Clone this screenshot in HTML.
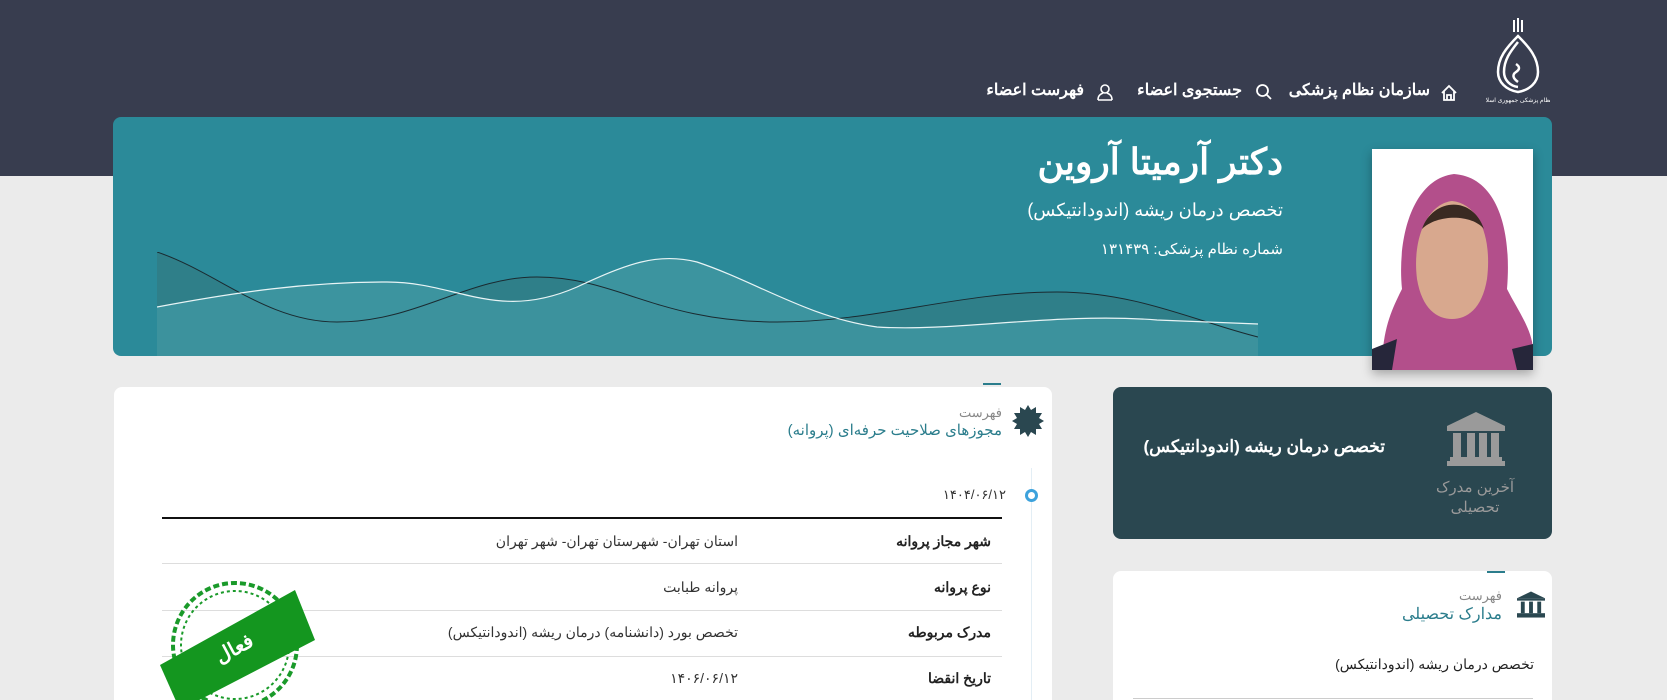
<!DOCTYPE html>
<html><head><meta charset="utf-8">
<style>
*{margin:0;padding:0;box-sizing:border-box}
html{width:1667px;height:700px;overflow:hidden}
body{width:1667px;height:700px;overflow:hidden;background:#ebebeb;font-family:"Liberation Sans","Noto Sans CJK SC",sans-serif;direction:rtl;position:relative}
.abs{position:absolute}
.hdr{left:0;top:0;width:1667px;height:176px;background:#383d4f}
.nav{top:80px;color:#fff;font-size:16px;font-weight:bold;white-space:nowrap}
.banner{left:113px;top:117px;width:1439px;height:239px;background:#2b8a99;border-radius:8px;overflow:hidden}
.photo{left:1372px;top:149px;width:161px;height:221px;background:#fff;box-shadow:0 4px 10px rgba(0,0,0,.3);overflow:hidden}
.card{background:#fff;border-radius:8px 8px 0 0}
.t{white-space:nowrap}
.row{left:162px;width:840px;height:1px;background:#ddd}
.lbl{right:676px;font-size:14px;font-weight:bold;color:#222}
.val{right:929px;font-size:14px;color:#333}
</style></head><body>
<div class="abs hdr"></div>
<svg class="abs" style="left:1486px;top:14px" width="64" height="90" viewBox="0 0 64 90">
<g fill="none" stroke="#fff" stroke-width="2.5">
<path d="M32 22 C20 34 12 44 12 58 C12 68 20 76 32 78 C44 76 52 68 52 58 C52 44 44 34 32 22Z"/>
<path d="M32 28 C24 38 18 46 18 58 C18 66 24 72 32 73"/>
<path d="M30 50 q6 4 0 8 q-6 4 2 10"/>
</g>
<path d="M28 6v12M32 4v14M36 6v12" stroke="#fff" stroke-width="2"/>
<text x="32" y="88" fill="#fff" font-size="6" text-anchor="middle">سازمان نظام پزشکی جمهوری اسلامی ایران</text>
</svg>
<svg class="abs" style="left:1439px;top:83px" width="20" height="20" viewBox="0 0 20 20"><path d="M3 10 L10 3 L17 10 M5 8 V17 H15 V8 M8 17 V12 H12 V17" fill="none" stroke="#fff" stroke-width="1.8"/></svg>
<div class="abs nav" style="right:237px">سازمان نظام پزشکی</div>
<svg class="abs" style="left:1255px;top:83px" width="18" height="18" viewBox="0 0 18 18"><circle cx="7.5" cy="7.5" r="5.5" fill="none" stroke="#fff" stroke-width="1.8"/><path d="M11.5 11.5 L16 16" stroke="#fff" stroke-width="1.8"/></svg>
<div class="abs nav" style="right:425px">جستجوی اعضاء</div>
<svg class="abs" style="left:1096px;top:83px" width="18" height="18" viewBox="0 0 18 18"><circle cx="9" cy="6" r="4" fill="none" stroke="#fff" stroke-width="1.6"/><path d="M2 17 C2 12 5 11 7 10 M16 17 C16 12 13 11 11 10 M2 17 H16" fill="none" stroke="#fff" stroke-width="1.6"/></svg>
<div class="abs nav" style="right:583px">فهرست اعضاء</div>

<div class="abs banner">
<svg class="abs" style="left:44px;top:135px" width="1101" height="104" viewBox="0 0 1101 104">
<path d="M0 0 C60 20 110 70 180 70 C260 70 310 25 380 25 C460 25 500 70 620 70 C720 70 800 40 900 40 C980 40 1040 70 1101 85 V104 H0Z" fill="#2f7f89"/>
<path d="M0 55 C80 40 150 30 230 30 C300 30 340 70 420 35 C470 12 500 0 540 10 C600 30 650 65 720 75 C800 80 900 60 1000 68 L1101 72 V104 H0Z" fill="#3e95a0" opacity=".9"/>
<path d="M0 0 C60 20 110 70 180 70 C260 70 310 25 380 25 C460 25 500 70 620 70 C720 70 800 40 900 40 C980 40 1040 70 1101 85" fill="none" stroke="#1a2a30" stroke-width="1"/>
<path d="M0 55 C80 40 150 30 230 30 C300 30 340 70 420 35 C470 12 500 0 540 10 C600 30 650 65 720 75 C800 80 900 60 1000 68 L1101 72" fill="none" stroke="#e8f4f5" stroke-width="1.2"/>
</svg>
<div class="abs t" style="right:269px;top:24px;font-size:36px;font-weight:bold;color:#fff">دکتر آرمیتا آروین</div>
<div class="abs t" style="right:269px;top:83px;font-size:18px;color:#fff">تخصص درمان ریشه (اندودانتیکس)</div>
<div class="abs t" style="right:269px;top:123px;font-size:15px;color:#fff">شماره نظام پزشکی: ۱۳۱۴۳۹</div>
</div>
<div class="abs photo">
<svg width="161" height="221" viewBox="0 0 161 221">
<rect width="161" height="221" fill="#fff"/>
<path d="M10 221 C10 180 20 160 30 140 C25 90 40 30 82 25 C125 28 140 80 135 140 C145 160 160 180 161 200 V221Z" fill="#b34f8b"/>
<path d="M45 130 C40 90 55 55 80 52 C108 55 120 90 115 130 C110 160 95 170 80 170 C65 170 50 160 45 130Z" fill="#d8a88e"/>
<path d="M50 80 C60 50 100 45 112 80 C100 65 65 65 50 80Z" fill="#3a2a22"/>
<path d="M0 200 L25 190 L20 221 H0Z M161 195 L140 200 L145 221 H161Z" fill="#26263a"/>
</svg></div>

<div class="abs card" style="left:114px;top:387px;width:938px;height:313px"></div>
<div class="abs" style="left:983px;top:383px;width:18px;height:2px;background:#2b7d8c"></div>
<svg class="abs" style="left:1012px;top:405px" width="32" height="32" viewBox="0 0 32 32"><polygon fill="#2a4750" points="16,0 19,5 24,2 24,8 30,8 27,13 32,16 27,19 30,24 24,24 24,30 19,27 16,32 13,27 8,30 8,24 2,24 5,19 0,16 5,13 2,8 8,8 8,2 13,5"/></svg>
<div class="abs t" style="right:665px;top:405px;font-size:13px;color:#888">فهرست</div>
<div class="abs t" style="right:665px;top:421px;font-size:15px;color:#2b7d8c">مجوزهای صلاحیت حرفه‌ای (پروانه)</div>
<div class="abs" style="left:1031px;top:468px;width:1px;height:232px;background:#e3eef5"></div>
<div class="abs" style="left:1025px;top:489px;width:13px;height:13px;border-radius:50%;border:3px solid #3da2dc;background:#fff"></div>
<div class="abs t" style="right:661px;top:487px;font-size:13px;color:#333">۱۴۰۴/۰۶/۱۲</div>
<div class="abs" style="left:162px;top:517px;width:840px;height:2px;background:#111"></div>
<div class="abs row" style="top:563px"></div>
<div class="abs row" style="top:610px"></div>
<div class="abs row" style="top:656px"></div>
<div class="abs t lbl" style="top:533px">شهر مجاز پروانه</div>
<div class="abs t val" style="top:533px">استان تهران- شهرستان تهران- شهر تهران</div>
<div class="abs t lbl" style="top:579px">نوع پروانه</div>
<div class="abs t val" style="top:579px">پروانه طبابت</div>
<div class="abs t lbl" style="top:624px">مدرک مربوطه</div>
<div class="abs t val" style="top:624px">تخصص بورد (دانشنامه) درمان ریشه (اندودانتیکس)</div>
<div class="abs t lbl" style="top:670px">تاریخ انقضا</div>
<div class="abs t val" style="top:670px">۱۴۰۶/۰۶/۱۲</div>
<svg class="abs" style="left:155px;top:570px" width="180" height="130" viewBox="0 0 180 130">
<circle cx="80" cy="75" r="62" fill="none" stroke="#1a9a2a" stroke-width="4" stroke-dasharray="6 3"/>
<circle cx="80" cy="75" r="54" fill="none" stroke="#1a9a2a" stroke-width="2" stroke-dasharray="3 3"/>
<polygon points="5,95 140,20 160,70 25,140" fill="#14961f"/>
<text x="80" y="85" fill="#fff" font-size="20" font-weight="bold" text-anchor="middle" transform="rotate(-28 80 80)">فعال</text>
</svg>

<div class="abs" style="left:1113px;top:387px;width:439px;height:152px;background:#2a4750;border-radius:8px"></div>
<svg class="abs" style="left:1447px;top:412px" width="58" height="54" viewBox="0 0 58 54">
<polygon points="29,0 58,14 0,14" fill="#9a9a9a"/><rect x="0" y="14" width="58" height="5" fill="#9a9a9a"/>
<rect x="6" y="21" width="8" height="24" fill="#9a9a9a"/><rect x="20" y="21" width="8" height="24" fill="#9a9a9a"/><rect x="32" y="21" width="8" height="24" fill="#9a9a9a"/><rect x="44" y="21" width="8" height="24" fill="#9a9a9a"/>
<rect x="3" y="45" width="52" height="4" fill="#9a9a9a"/><rect x="0" y="49" width="58" height="5" fill="#9a9a9a"/>
</svg>
<div class="abs" style="left:1425px;top:478px;width:100px;text-align:center;font-size:15px;color:#9a9a9a;line-height:20px">آخرین مدرک<br>تحصیلی</div>
<div class="abs t" style="right:282px;top:437px;font-size:17px;font-weight:bold;color:#fff">تخصص درمان ریشه (اندودانتیکس)</div>

<div class="abs card" style="left:1113px;top:571px;width:439px;height:129px"></div>
<div class="abs" style="left:1487px;top:571px;width:18px;height:2px;background:#2b7d8c"></div>
<svg class="abs" style="left:1517px;top:591px" width="28" height="27" viewBox="0 0 58 54">
<polygon points="29,0 58,14 0,14" fill="#2a4750"/><rect x="0" y="14" width="58" height="5" fill="#2a4750"/>
<rect x="8" y="21" width="8" height="24" fill="#2a4750"/><rect x="25" y="21" width="8" height="24" fill="#2a4750"/><rect x="42" y="21" width="8" height="24" fill="#2a4750"/>
<rect x="0" y="45" width="58" height="9" fill="#2a4750"/>
</svg>
<div class="abs t" style="right:165px;top:588px;font-size:13px;color:#888">فهرست</div>
<div class="abs t" style="right:165px;top:604px;font-size:16px;color:#2b7d8c">مدارک تحصیلی</div>
<div class="abs t" style="right:133px;top:656px;font-size:14px;color:#222">تخصص درمان ریشه (اندودانتیکس)</div>
<div class="abs" style="left:1133px;top:698px;width:400px;height:1px;background:#ccc"></div>
</body></html>
